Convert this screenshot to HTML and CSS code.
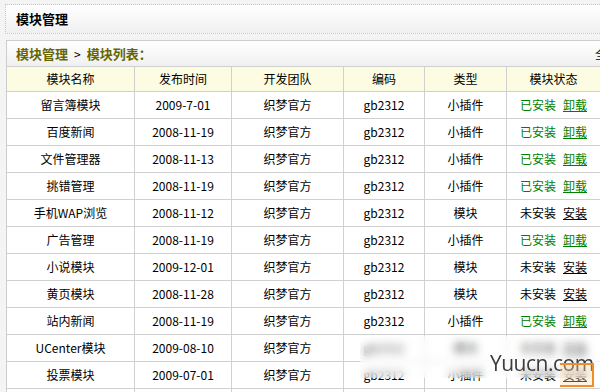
FILE: index.html
```html
<!DOCTYPE html>
<html lang="zh-CN">
<head>
  <meta charset="UTF-8">
  <title>模块管理</title>
  <link rel="stylesheet" href="styles.css">
</head>
<body>
  <div class="main-title">模块管理</div>

  <div class="panel">
    <div class="crumb">
      <div class="crumb-path">
        <b>模块管理</b><span class="sep">&gt;</span><b>模块列表：</b>
      </div>
      <div class="crumb-right">全部模块</div>
    </div>

    <table class="list">
      <colgroup>
        <col class="c-name"><col class="c-date"><col class="c-team"><col class="c-code"><col class="c-type"><col class="c-state"><col class="c-more">
      </colgroup>
      <tr>
        <th>模块名称</th><th>发布时间</th><th>开发团队</th><th>编码</th><th>类型</th><th>模块状态</th><th>管理</th>
      </tr>
      <tr><td>留言簿模块</td><td>2009-7-01</td><td>织梦官方</td><td>gb2312</td><td>小插件</td><td><span class="on">已安装</span><a class="act on" href="#">卸载</a></td><td></td></tr>
      <tr><td>百度新闻</td><td>2008-11-19</td><td>织梦官方</td><td>gb2312</td><td>小插件</td><td><span class="on">已安装</span><a class="act on" href="#">卸载</a></td><td></td></tr>
      <tr><td>文件管理器</td><td>2008-11-13</td><td>织梦官方</td><td>gb2312</td><td>小插件</td><td><span class="on">已安装</span><a class="act on" href="#">卸载</a></td><td></td></tr>
      <tr><td>挑错管理</td><td>2008-11-19</td><td>织梦官方</td><td>gb2312</td><td>小插件</td><td><span class="on">已安装</span><a class="act on" href="#">卸载</a></td><td></td></tr>
      <tr><td>手机WAP浏览</td><td>2008-11-12</td><td>织梦官方</td><td>gb2312</td><td>模块</td><td><span>未安装</span><a class="act" href="#">安装</a></td><td></td></tr>
      <tr><td>广告管理</td><td>2008-11-19</td><td>织梦官方</td><td>gb2312</td><td>小插件</td><td><span class="on">已安装</span><a class="act on" href="#">卸载</a></td><td></td></tr>
      <tr><td>小说模块</td><td>2009-12-01</td><td>织梦官方</td><td>gb2312</td><td>模块</td><td><span>未安装</span><a class="act" href="#">安装</a></td><td></td></tr>
      <tr><td>黄页模块</td><td>2008-11-28</td><td>织梦官方</td><td>gb2312</td><td>模块</td><td><span>未安装</span><a class="act" href="#">安装</a></td><td></td></tr>
      <tr><td>站内新闻</td><td>2008-11-19</td><td>织梦官方</td><td>gb2312</td><td>小插件</td><td><span class="on">已安装</span><a class="act on" href="#">卸载</a></td><td></td></tr>
      <tr><td>UCenter模块</td><td>2009-08-10</td><td>织梦官方</td><td>gb2312</td><td>模块</td><td><span>未安装</span><a class="act" href="#">安装</a></td><td></td></tr>
      <tr><td>投票模块</td><td>2009-07-01</td><td>织梦官方</td><td>gb2312</td><td>小插件</td><td><span>未安装</span><a class="act" href="#">安装</a></td><td></td></tr>
      <tr><td>采集模块</td><td>2009-07-01</td><td>织梦官方</td><td>gb2312</td><td>模块</td><td><span>未安装</span><a class="act" href="#">安装</a></td><td></td></tr>
    </table>
  </div>

  <div class="mosaic"></div>
  <div class="mark">Yuucn.com</div>
  <div class="mark-box"></div>
</body>
</html>
```

FILE: styles.css
```css
body {
  margin: 0;
  background: #f4f4f4;
  color: #000;
  font-family: "Noto Sans CJK SC", "Noto Sans", sans-serif;
  font-size: 12px;
  overflow: hidden;
}
.main-title {
  margin: 4px 0 0 5px;
  height: 28px;
  line-height: 28px;
  padding-left: 10px;
  border: 1px dotted #c3d38c;
  border-right: none;
  background: linear-gradient(#ffffff, #f0f0f0);
  font-size: 13px;
  font-weight: bold;
}
.panel {
  margin: 6px 0 0 6px;
  width: 653px;
  border: 1px solid #cccccc;
  background: #fff;
}
.crumb {
  display: flex;
  justify-content: space-between;
  height: 25px;
  line-height: 25px;
  padding: 0 0 0 9px;
  background: linear-gradient(#ffffff, #f0f0f0);
}
.crumb-path b {
  color: #666600;
  font-size: 13px;
}
.crumb-path .sep {
  margin: 0 6px;
  color: #000;
}
.crumb-right {
  margin-right: 17px;
}
.list {
  width: 653px;
  table-layout: fixed;
  border-collapse: separate;
  border-spacing: 0;
}
.c-name { width: 127px; }
.c-date { width: 97px; }
.c-team { width: 112px; }
.c-code { width: 81px; }
.c-type { width: 82px; }
.c-state { width: 94px; }
.list th, .list td {
  padding: 0;
  box-sizing: border-box;
  border-top: 1px solid #d0d0d0;
  border-left: 1px solid #d0d0d0;
  text-align: center;
  white-space: nowrap;
  font-weight: normal;
}
.list th:first-child, .list td:first-child {
  border-left: none;
}
.list th {
  height: 25px;
  line-height: 24px;
  background: #fbfce2;
}
.list td {
  height: 27px;
  line-height: 26px;
}
.on {
  color: #008000;
}
.act {
  margin-left: 7px;
  color: #000;
  text-decoration: underline;
}
.act.on {
  color: #008000;
}
.mosaic {
  position: absolute;
  left: 360px;
  top: 336px;
  width: 240px;
  height: 42px;
  backdrop-filter: blur(4px);
  background: rgba(255, 255, 255, 0.35);
}
.mark {
  position: absolute;
  left: 490px;
  top: 349px;
  font-family: "Open Sans", sans-serif;
  font-size: 21px;
  color: #3c3c3c;
  letter-spacing: -0.5px;
}
.mark-box {
  position: absolute;
  left: 560px;
  top: 363px;
  width: 32px;
  height: 20px;
  border: 2px solid #f28c28;
  border-left-width: 0;
  background: rgba(255, 220, 180, 0.35);
}
```
